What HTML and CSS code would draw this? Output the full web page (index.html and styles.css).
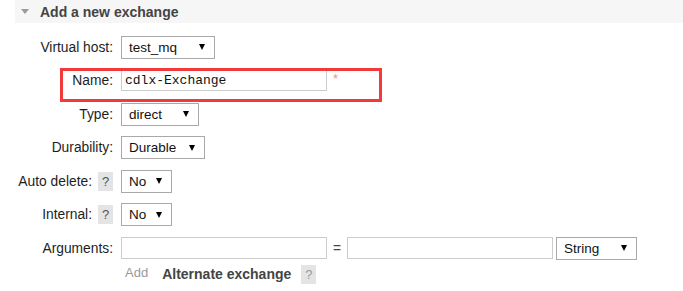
FILE: index.html
```html
<!DOCTYPE html>
<html lang="en">
<head>
    <meta charset="UTF-8">
    <meta name="viewport" content="width=device-width, initial-scale=1.0">
    <title>Add a new exchange</title>
    <link rel="stylesheet" href="styles.css">
</head>
<body>
    <div class="section">
        <h2 class="section-title"><span class="toggle"></span>Add a new exchange</h2>

        <form class="form">
            <label class="label">Virtual host:</label>
            <div class="field">
                <span class="select w-vhost"><select><option>test_mq</option></select></span>
            </div>

            <label class="label name-label">Name:<span class="mark"></span></label>
            <div class="field">
                <input class="text mono w-name" type="text" value="cdlx-Exchange">
                <span class="required">*</span>
            </div>

            <label class="label">Type:</label>
            <div class="field">
                <span class="select w-type"><select><option>direct</option></select></span>
            </div>

            <label class="label">Durability:</label>
            <div class="field">
                <span class="select w-dur"><select><option>Durable</option></select></span>
            </div>

            <label class="label">Auto delete: <span class="help">?</span></label>
            <div class="field">
                <span class="select w-bool"><select><option>No</option></select></span>
            </div>

            <label class="label">Internal: <span class="help">?</span></label>
            <div class="field">
                <span class="select w-bool"><select><option>No</option></select></span>
            </div>

            <label class="label">Arguments:</label>
            <div class="field">
                <input class="text w-arg" type="text">
                <span class="equals">=</span>
                <input class="text w-arg" type="text">
                <span class="select w-kind"><select><option>String</option></select></span>
            </div>

            <div class="field extra">
                <span class="add">Add</span>
                <span class="alt">Alternate exchange</span>
                <span class="help light">?</span>
            </div>
        </form>
    </div>
</body>
</html>
```

FILE: styles.css
```css
body {
    margin: 0;
    font-family: 'Liberation Sans', Arial, sans-serif;
    font-size: 13.8px;
    color: #1e1e1e;
    background: #fff;
}
.section-title {
    margin: 0 0 0 15px;
    height: 23px;
    padding-left: 6px;
    display: flex;
    align-items: center;
    background: #f6f6f6;
    color: #444;
    font-size: 14px;
    font-weight: bold;
}
.toggle {
    width: 0;
    height: 0;
    border-left: 4px solid transparent;
    border-right: 4px solid transparent;
    border-top: 5px solid #9a9a9a;
    margin-right: 11px;
}
.form {
    margin-top: 12px;
    display: grid;
    grid-template-columns: 113px auto;
    grid-auto-rows: 24px;
    column-gap: 8px;
    row-gap: 9.5px;
    align-items: center;
}
.label {
    display: flex;
    justify-content: flex-end;
    align-items: center;
    gap: 6px;
    white-space: nowrap;
}
.name-label {
    position: relative;
}
.mark {
    position: absolute;
    left: 60px;
    top: -5px;
    width: 322px;
    height: 34px;
    box-sizing: border-box;
    border: 3px solid #f23a3a;
    pointer-events: none;
}
.field {
    display: flex;
    align-items: center;
}
.select {
    position: relative;
    display: inline-block;
}
.select select {
    appearance: none;
    -webkit-appearance: none;
    width: 100%;
    height: 23px;
    margin: 0;
    padding: 0 0 0 7px;
    border: 1px solid #a9a9a9;
    border-radius: 0;
    background: #fff;
    color: #111;
    font-family: 'Liberation Sans', Arial, sans-serif;
    font-size: 13.5px;
}
.select::after {
    content: "";
    position: absolute;
    right: 10px;
    top: 50%;
    margin-top: -3px;
    border-left: 3px solid transparent;
    border-right: 3px solid transparent;
    border-top: 6px solid #000;
    pointer-events: none;
}
.w-vhost { width: 94px; }
.w-type { width: 78px; }
.w-dur { width: 84px; }
.w-bool { width: 51px; }
.w-kind { width: 81px; margin-left: 3px; }
.text {
    height: 22px;
    box-sizing: border-box;
    margin: 0;
    padding: 0 3px;
    border: 1px solid #ccc;
    font-family: 'Liberation Sans', Arial, sans-serif;
    font-size: 13px;
    color: #111;
}
.mono {
    font-family: 'Liberation Mono', 'Courier New', monospace;
    font-size: 13px;
}
.w-name { width: 206px; height: 21px; }
.w-arg { width: 206px; }
.required {
    align-self: flex-start;
    margin: 1px 0 0 6px;
    color: #f88;
    font-size: 13px;
}
.equals {
    margin: 0 6px;
    color: #444;
}
.help {
    display: inline-flex;
    justify-content: center;
    align-items: center;
    width: 15px;
    height: 19px;
    background: #e4e4e4;
    color: #555;
    font-size: 13px;
}
.help.light {
    color: #999;
    margin-left: 10px;
}
.extra {
    grid-column: 2;
    align-self: start;
    margin-top: -5px;
    padding-left: 4px;
}
.add {
    color: #999;
    font-size: 13px;
    margin-right: 14px;
    margin-bottom: 4px;
}
.alt {
    font-size: 14px;
    font-weight: bold;
    color: #444;
}
```
